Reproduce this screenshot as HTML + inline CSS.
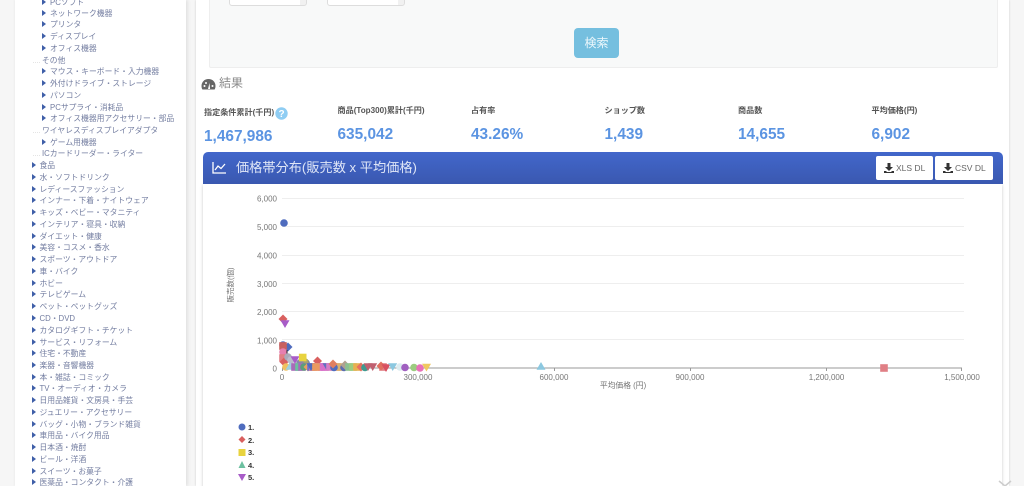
<!DOCTYPE html>
<html lang="ja"><head><meta charset="utf-8"><title>結果</title>
<style>
html,body{margin:0;padding:0;width:1024px;height:486px;overflow:hidden;background:#f6f6f6;font-family:"Liberation Sans","Noto Sans CJK JP",sans-serif}
#wrap{position:absolute;left:0;top:0;width:1024px;height:486px;overflow:hidden;filter:blur(.35px)}
.a{position:absolute;white-space:nowrap}
#side{position:absolute;left:15px;top:0;width:171px;height:486px;background:#fff;box-shadow:2px 0 3px #e2e2e2,-1px 0 2px #eee}
#tree{position:absolute;left:0;top:2px;width:190px;height:486px}
#main{position:absolute;left:196px;top:0;width:813px;height:486px;background:#fff;box-shadow:0 0 2px #ccc}
.t{position:absolute;white-space:nowrap;font-size:7.8px;line-height:10px;color:#737da0}
.t.ar:before{content:"";position:absolute;left:-8px;top:1px;border-left:4px solid #3f5fa8;border-top:3px solid transparent;border-bottom:3px solid transparent}
.t.dot:before{content:"";position:absolute;left:-9px;top:6px;width:7px;border-top:1px dotted #e4e4e4}
.l{position:absolute;font-size:8.100px;font-weight:bold;color:#555;white-space:nowrap;line-height:10px}
.n{position:absolute;font-size:15.4px;font-weight:bold;color:#5b94e2;white-space:nowrap;line-height:18px}
.btn{position:absolute;top:156px;height:24px;background:#fff;border-radius:2px;font-size:8.500px;line-height:24px;color:#666;white-space:nowrap}
.btn svg{position:absolute;left:8px;top:7px}
.btn span{position:absolute;left:20px;top:0}
</style></head><body><div id="wrap">
<div id="side"></div>
<div id="tree">
<div class="t ar" style="left:50px;top:-4px">PCソフト</div>
<div class="t ar" style="left:50px;top:7px">ネットワーク機器</div>
<div class="t ar" style="left:50px;top:18px">プリンタ</div>
<div class="t ar" style="left:50px;top:30px">ディスプレイ</div>
<div class="t ar" style="left:50px;top:42px">オフィス機器</div>
<div class="t dot" style="left:42px;top:54px">その他</div>
<div class="t ar" style="left:50px;top:65px">マウス・キーボード・入力機器</div>
<div class="t ar" style="left:50px;top:77px">外付けドライブ・ストレージ</div>
<div class="t ar" style="left:50px;top:89px">パソコン</div>
<div class="t ar" style="left:50px;top:101px">PCサプライ・消耗品</div>
<div class="t ar" style="left:50px;top:112px">オフィス機器用アクセサリー・部品</div>
<div class="t dot" style="left:42px;top:124px">ワイヤレスディスプレイアダプタ</div>
<div class="t ar" style="left:50px;top:136px">ゲーム用機器</div>
<div class="t dot" style="left:42px;top:147px">ICカードリーダー・ライター</div>
<div class="t ar" style="left:39.5px;top:159px">食品</div>
<div class="t ar" style="left:39.5px;top:171px">水・ソフトドリンク</div>
<div class="t ar" style="left:39.5px;top:183px">レディースファッション</div>
<div class="t ar" style="left:39.5px;top:194px">インナー・下着・ナイトウェア</div>
<div class="t ar" style="left:39.5px;top:206px">キッズ・ベビー・マタニティ</div>
<div class="t ar" style="left:39.5px;top:218px">インテリア・寝具・収納</div>
<div class="t ar" style="left:39.5px;top:230px">ダイエット・健康</div>
<div class="t ar" style="left:39.5px;top:241px">美容・コスメ・香水</div>
<div class="t ar" style="left:39.5px;top:253px">スポーツ・アウトドア</div>
<div class="t ar" style="left:39.5px;top:265px">車・バイク</div>
<div class="t ar" style="left:39.5px;top:277px">ホビー</div>
<div class="t ar" style="left:39.5px;top:288px">テレビゲーム</div>
<div class="t ar" style="left:39.5px;top:300px">ペット・ペットグッズ</div>
<div class="t ar" style="left:39.5px;top:312px">CD・DVD</div>
<div class="t ar" style="left:39.5px;top:324px">カタログギフト・チケット</div>
<div class="t ar" style="left:39.5px;top:336px">サービス・リフォーム</div>
<div class="t ar" style="left:39.5px;top:347px">住宅・不動産</div>
<div class="t ar" style="left:39.5px;top:359px">楽器・音響機器</div>
<div class="t ar" style="left:39.5px;top:371px">本・雑誌・コミック</div>
<div class="t ar" style="left:39.5px;top:382px">TV・オーディオ・カメラ</div>
<div class="t ar" style="left:39.5px;top:394px">日用品雑貨・文房具・手芸</div>
<div class="t ar" style="left:39.5px;top:406px">ジュエリー・アクセサリー</div>
<div class="t ar" style="left:39.5px;top:418px">バッグ・小物・ブランド雑貨</div>
<div class="t ar" style="left:39.5px;top:429px">車用品・バイク用品</div>
<div class="t ar" style="left:39.5px;top:441px">日本酒・焼酎</div>
<div class="t ar" style="left:39.5px;top:453px">ビール・洋酒</div>
<div class="t ar" style="left:39.5px;top:465px">スイーツ・お菓子</div>
<div class="t ar" style="left:39.5px;top:476px">医薬品・コンタクト・介護</div>
</div>

<div id="main"></div>
<div class="a" style="left:209px;top:-2px;width:787px;height:68px;background:#f8f9f9;border:1px solid #eee;border-radius:2px"></div>
<div class="a" style="left:229px;top:-5px;width:76px;height:9px;background:linear-gradient(90deg,#fff 92%,#f1f1f1 92%);border:1px solid #ddd;border-radius:3px"></div>
<div class="a" style="left:327px;top:-5px;width:76px;height:9px;background:linear-gradient(90deg,#fff 92%,#f1f1f1 92%);border:1px solid #ddd;border-radius:3px"></div>
<div class="a" style="left:574px;top:28px;width:45px;height:30px;background:#75bfdf;border-radius:4px;color:#eef8fc;font-size:12px;line-height:30px;text-align:center">検索</div>

<svg class="a" style="left:201px;top:78px" width="15" height="13" viewBox="0 0 15 13"><path d="M7.500 1C3.500 1 .5 4 .5 8c0 1.300.3 2.500.9 3.500h12.200c.6-1 .9-2.200.9-3.500C14.500 4 11.500 1 7.500 1z" fill="#666"/><path d="M7 11l1.500-6 .6 6z" fill="#fff"/><circle cx="3.500" cy="8" r="1" fill="#fff"/><circle cx="5" cy="5" r="1" fill="#fff"/><circle cx="11.500" cy="8" r="1" fill="#fff"/></svg>
<div class="a" style="left:219px;top:76px;font-size:12px;line-height:15px;color:#8a8a8a">結果</div>

<div class="l" style="left:204px;top:108px">指定条件累計(千円)</div>
<svg class="a" style="left:275px;top:106.500px" width="13" height="13" viewBox="0 0 13 13"><circle cx="6.500" cy="6.500" r="6.200" fill="#8fcdf3"/><text x="6.500" y="10" font-size="10" font-weight="bold" text-anchor="middle" fill="#fff" font-family="Liberation Sans">?</text></svg>
<div class="l" style="left:337.500px;top:106px">商品(Top300)累計(千円)</div>
<div class="l" style="left:471px;top:106px">占有率</div>
<div class="l" style="left:604.500px;top:106px">ショップ数</div>
<div class="l" style="left:738px;top:106px">商品数</div>
<div class="l" style="left:871.500px;top:106px">平均価格(円)</div>
<div class="n" style="left:204px;top:128px">1,467,986</div>
<div class="n" style="left:337.500px;top:126px">635,042</div>
<div class="n" style="left:471px;top:126px">43.26%</div>
<div class="n" style="left:604.500px;top:126px">1,439</div>
<div class="n" style="left:738px;top:126px">14,655</div>
<div class="n" style="left:871.500px;top:126px">6,902</div>

<div class="a" style="left:203px;top:184px;width:799px;height:310px;background:#fff;box-shadow:0 1px 3px rgba(0,0,0,.22)"></div>
<div class="a" style="left:203px;top:152px;width:800px;height:32px;background:linear-gradient(#4267cb,#3a58b0);border-radius:5px 5px 0 0"></div>
<svg class="a" style="left:212px;top:161px" width="15" height="13" viewBox="0 0 15 13"><path d="M1 1v11h13" fill="none" stroke="#fff" stroke-width="1.300"/><path d="M3 9l3-4 3 2.500L13 3" fill="none" stroke="#fff" stroke-width="1.300"/></svg>
<div class="a" style="left:236px;top:159px;font-size:13.200px;line-height:18px;color:#dfe6f7">価格帯分布(販売数 x 平均価格)</div>
<div class="btn" style="left:876px;width:57px"><svg width="10" height="10" viewBox="0 0 10 10"><path d="M3.500 0h3v4h2.500L5 8 1 4h2.500zM0 8h2l1 1h4l1-1h2v2H0z" fill="#333"/></svg><span>XLS DL</span></div>
<div class="btn" style="left:935px;width:58px"><svg width="10" height="10" viewBox="0 0 10 10"><path d="M3.500 0h3v4h2.500L5 8 1 4h2.500zM0 8h2l1 1h4l1-1h2v2H0z" fill="#333"/></svg><span>CSV DL</span></div>

<svg class="a" style="left:0;top:0" width="1024" height="486" viewBox="0 0 1024 486">
<defs>
<circle id="c" r="3.800"/>
<rect id="s" x="-3.800" y="-3.800" width="7.600" height="7.600"/>
<path id="d" d="M0-4.500L4.500 0 0 4.500-4.500 0z"/>
<path id="t" d="M0-4L4.500 3.800H-4.500z"/>
<path id="v" d="M0 4L4.500-3.800H-4.500z"/>
</defs>
<path d="M282 198.500H964M282 226.500H964M282 255.500H964M282 283.500H964M282 311.500H964M282 339.500H964" stroke="#eee"/>
<path d="M282 368H962M282.500 368v3M418.500 368v3M554.500 368v3M690.500 368v3M826.500 368v3M961.500 368v3" stroke="#999" fill="none"/>
<g font-family="Liberation Sans" font-size="8" fill="#777" text-anchor="end">
<text x="277" y="201.500">6,000</text><text x="277" y="230">5,000</text><text x="277" y="258.500">4,000</text><text x="277" y="287">3,000</text><text x="277" y="315">2,000</text><text x="277" y="343.500">1,000</text><text x="277" y="371.500">0</text>
</g>
<g font-family="Liberation Sans" font-size="8" fill="#777" text-anchor="middle">
<text x="282" y="380">0</text><text x="418" y="380">300,000</text><text x="554" y="380">600,000</text><text x="690" y="380">900,000</text><text x="826.500" y="380">1,200,000</text><text x="962" y="380">1,500,000</text>
</g>
<text x="623" y="388" font-family="Liberation Sans,Noto Sans CJK JP,sans-serif" font-size="7.800" fill="#777" text-anchor="middle">平均価格 (円)</text>
<text transform="translate(233,285) rotate(-90)" font-family="Liberation Sans,Noto Sans CJK JP,sans-serif" font-size="7.500" fill="#777" text-anchor="middle">販売数(個)</text>
<use href="#c" x="284" y="223" fill="#4f6cbe"/>
<use href="#d" x="283" y="319" fill="#d9605f"/><use href="#v" x="285" y="324" fill="#a85cc8"/>
<use href="#c" x="283" y="345" fill="#4f6cbe"/><use href="#d" x="288" y="347" fill="#4f6cbe"/><use href="#s" x="283" y="346" fill="#c9605f"/>
<use href="#c" x="283" y="352" fill="#e57fb0"/><use href="#s" x="283" y="358" fill="#e07f85"/><use href="#d" x="284" y="362" fill="#d9605f"/>
<path d="M287 350v8" stroke="#222"/>
<use href="#c" x="288" y="357" fill="#aab"/><use href="#c" x="291" y="360" fill="#bbc"/><use href="#v" x="295" y="360" fill="#a85cc8"/>
<use href="#d" x="317.500" y="361" fill="#d9605f"/>
<use href="#c" x="306" y="363" fill="#4f6cbe"/><use href="#c" x="305" y="362" fill="#a8a070"/><use href="#c" x="300" y="363" fill="#88a"/>
<use href="#s" x="302.700" y="357.500" fill="#e8d33f"/>
<use href="#c" x="286" y="367" fill="#f0c060"/><use href="#t" x="290" y="366" fill="#9fd0e0"/><use href="#s" x="295" y="367" fill="#a86bb8"/><use href="#s" x="299" y="367" fill="#6cc0a0"/><use href="#s" x="302" y="367" fill="#a86bb8"/><use href="#c" x="304" y="367" fill="#5c9e7a"/><use href="#d" x="308" y="367" fill="#e8a060"/><use href="#s" x="311" y="367" fill="#7070d0"/><use href="#s" x="313" y="367" fill="#e07f85"/>
<use href="#v" x="311" y="367" fill="#4f6cbe"/><use href="#c" x="316" y="367" fill="#e8b050"/><use href="#s" x="319" y="367" fill="#ec90b8"/><use href="#v" x="322" y="367" fill="#8060c8"/><use href="#s" x="322" y="367" fill="#d870c8"/><use href="#s" x="316" y="367" fill="#ea9a60"/>
<use href="#s" x="325" y="367" fill="#d870c8"/><use href="#c" x="331" y="367" fill="#9ccc80"/><use href="#v" x="327" y="367" fill="#6070c0"/>
<use href="#s" x="330" y="367" fill="#d67cc4"/><use href="#s" x="337" y="367" fill="#e8a060"/><use href="#s" x="341" y="367" fill="#d9b070"/>
<use href="#c" x="334" y="367.500" fill="#4f6cbe"/><use href="#d" x="333" y="364" fill="#e07f60"/><use href="#c" x="344" y="367.500" fill="#5c6cb0"/><use href="#d" x="345" y="365" fill="#b0a090"/><use href="#s" x="349" y="367" fill="#8cc090"/><use href="#s" x="353" y="367" fill="#9ccc80"/><use href="#s" x="357" y="367" fill="#e8b050"/><use href="#d" x="361" y="367" fill="#e87060"/><use href="#c" x="365" y="367.500" fill="#3f9a90"/><use href="#v" x="368" y="367" fill="#c06070"/><use href="#v" x="372.700" y="367" fill="#c06070"/>
<use href="#s" x="383" y="367" fill="#e07f85"/><use href="#d" x="381" y="366" fill="#e07060"/><use href="#v" x="386" y="368" fill="#d85060"/><use href="#v" x="392.700" y="367" fill="#8cc8e0"/><use href="#c" x="400" y="367" fill="#dcecf0"/><use href="#c" x="405" y="367.500" fill="#a060c0"/><use href="#c" x="414" y="367.500" fill="#9ccc80"/><use href="#c" x="420" y="368" fill="#e870b8"/><use href="#v" x="426.500" y="367.500" fill="#f0c860"/>
<use href="#t" x="541" y="366" fill="#8cc8e0"/><use href="#s" x="884" y="368" fill="#e07f85"/>
<circle cx="242" cy="427" r="3.500" fill="#4f6cbe"/><path d="M242 436l3.500 3.500-3.500 3.500-3.500-3.500z" fill="#d9605f"/><rect x="238.500" y="449" width="7" height="7" fill="#e8d33f"/><path d="M242 461l3.500 7h-7z" fill="#6cc0a0"/><path d="M238 474h8l-4 7z" fill="#a85cc8"/>
<g font-family="Liberation Sans" font-size="7.500" font-weight="bold" fill="#333">
<text x="248" y="430">1.</text><text x="248" y="443">2.</text><text x="248" y="455">3.</text><text x="248" y="468">4.</text><text x="248" y="480">5.</text></g>
<path d="M999 481l6 5 6-5" fill="none" stroke="#ccc" stroke-width="1.500"/>
</svg>
</div></body></html>
